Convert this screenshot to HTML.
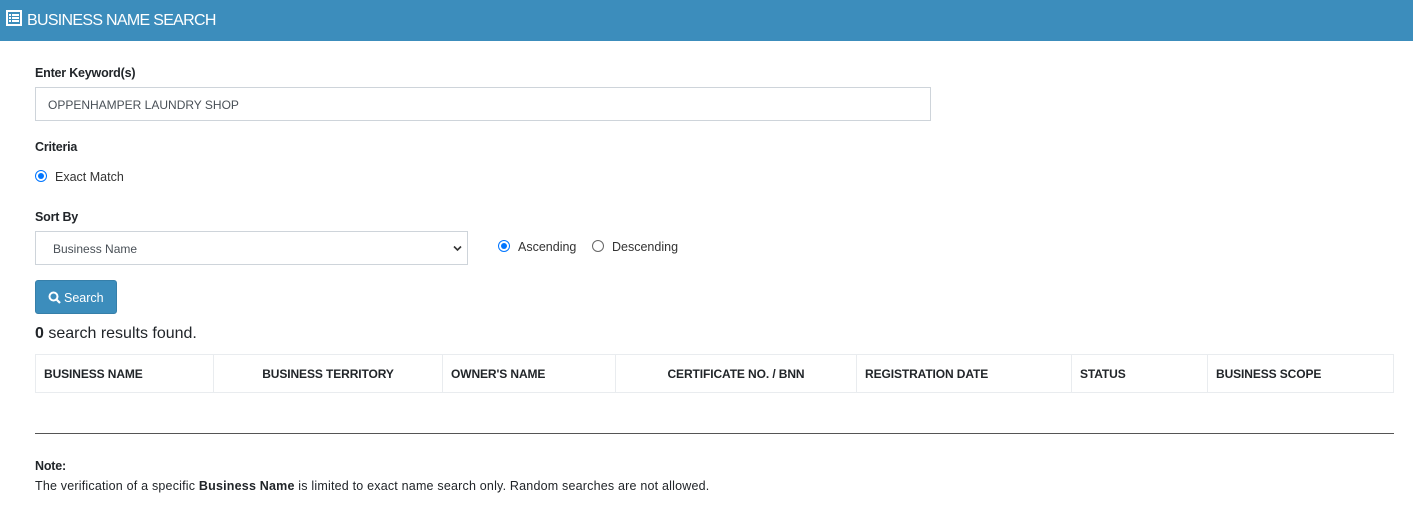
<!DOCTYPE html>
<html><head><style>
body{margin:0;width:1413px;height:509px;background:#fff;font-family:"Liberation Sans",sans-serif;color:#212529;position:relative;overflow:hidden}
.hdr{position:absolute;left:0;top:0;width:1413px;height:41px;background:#3c8dbc;color:#fff;font-size:16px;letter-spacing:-0.7px}
.hdr span{position:absolute;left:27px;top:12px}
.ab{position:absolute;white-space:nowrap}
.lbl{font-weight:bold;font-size:12.5px;letter-spacing:-0.2px}
.box{position:absolute;border:1px solid #ced4da;box-sizing:border-box;background:#fff;font-size:12px;color:#495057}
.radio{position:absolute;width:12px;height:12px;border:1px solid #666;border-radius:50%;box-sizing:border-box}
.radio.on{border:1px solid #0075ff}
.radio.on::after{content:"";position:absolute;left:2px;top:2px;width:6px;height:6px;border-radius:50%;background:#0075ff}
.t{font-size:12.5px;color:#333}
table{position:absolute;left:35px;top:354px;width:1359px;border-collapse:collapse;table-layout:fixed}
td{border:1px solid #e9ecef;height:36px;font-weight:bold;font-size:12px;padding:1px 8px 0;letter-spacing:-0.1px;color:#212529;white-space:nowrap}
</style></head><body>
<div class="hdr"><svg style="position:absolute;left:6px;top:10px" width="16" height="16" viewBox="0 0 16 16"><rect x="1" y="1" width="14" height="14" fill="none" stroke="#fff" stroke-width="2"/><rect x="3" y="4" width="2" height="2" fill="#fff"/><rect x="6" y="4" width="7" height="2" fill="#fff"/><rect x="3" y="7" width="2" height="2" fill="#fff"/><rect x="6" y="7" width="7" height="2" fill="#fff"/><rect x="3" y="10" width="2" height="2" fill="#fff"/><rect x="6" y="10" width="7" height="2" fill="#fff"/></svg><span>BUSINESS NAME SEARCH</span></div>
<div class="ab lbl" style="left:35px;top:66px">Enter Keyword(s)</div>
<div class="box" style="left:35px;top:87px;width:896px;height:34px;padding:10px 12px">OPPENHAMPER LAUNDRY SHOP</div>
<div class="ab lbl" style="left:35px;top:140px">Criteria</div>
<div class="radio on" style="left:35px;top:170px"></div>
<div class="ab t" style="left:55px;top:170px">Exact Match</div>
<div class="ab lbl" style="left:35px;top:210px">Sort By</div>
<div class="box" style="left:35px;top:231px;width:433px;height:34px;padding:10px 17px">Business Name<svg style="position:absolute;right:5px;top:13px" width="9" height="7" viewBox="0 0 9 7"><path d="M1 1.5L4.5 5 8 1.5" fill="none" stroke="#333" stroke-width="1.6"/></svg></div>
<div class="radio on" style="left:498px;top:240px"></div>
<div class="ab t" style="left:518px;top:240px">Ascending</div>
<div class="radio" style="left:592px;top:240px"></div>
<div class="ab t" style="left:612px;top:240px">Descending</div>
<div class="ab" style="left:35px;top:280px;width:82px;height:34px;background:#3c8dbc;border:1px solid #367fa9;box-sizing:border-box;border-radius:3px;color:#fff;font-size:12.5px">
<svg style="position:absolute;left:12px;top:10px" width="13" height="13" viewBox="0 0 13 13"><circle cx="5.5" cy="5.5" r="4" fill="none" stroke="#fff" stroke-width="2"/><path d="M8.5 8.5L12 12" stroke="#fff" stroke-width="2.2"/></svg><span style="position:absolute;left:28px;top:10px">Search</span></div>
<div class="ab" style="left:35px;top:325px;font-size:16px;letter-spacing:0"><b>0</b> search results found.</div>
<table><tr>
<td style="width:161px">BUSINESS NAME</td>
<td style="width:212px;text-align:center">BUSINESS TERRITORY</td>
<td style="width:156px">OWNER'S NAME</td>
<td style="width:224px;text-align:center">CERTIFICATE NO. / BNN</td>
<td style="width:198px">REGISTRATION DATE</td>
<td style="width:119px">STATUS</td>
<td>BUSINESS SCOPE</td>
</tr></table>
<div class="ab" style="left:35px;top:433px;width:1359px;height:1px;background:#555"></div>
<div class="ab lbl" style="left:35px;top:459px">Note:</div>
<div class="ab" style="left:35px;top:479px;font-size:12.5px;letter-spacing:0.2px">The verification of a specific <b>Business Name</b> is limited to exact name search only. Random searches are not allowed.</div>
</body></html>
